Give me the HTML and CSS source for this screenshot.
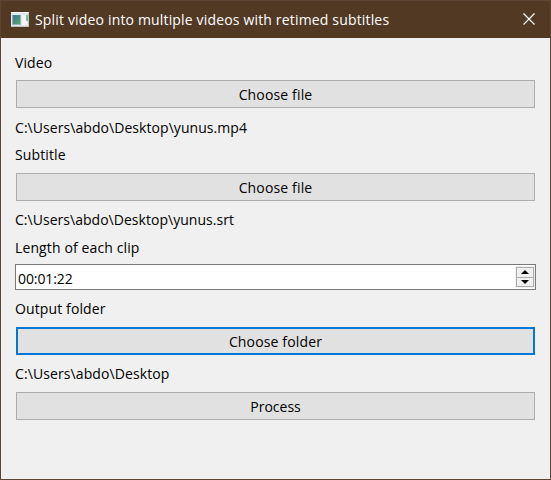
FILE: index.html
```html
<!DOCTYPE html>
<html lang="en">
<head>
<meta charset="utf-8">
<title>Split video into multiple videos with retimed subtitles</title>
<link rel="stylesheet" href="styles.css">
</head>
<body>
<div class="window">
  <header class="titlebar">
    <svg class="app-icon" width="18" height="15" viewBox="0 0 18 15">
      <defs><linearGradient id="screen" x1="0" y1="0" x2="1" y2="1"><stop offset="0" stop-color="#3f76a0"/><stop offset="1" stop-color="#55a76a"/></linearGradient></defs>
      <rect width="18" height="15" fill="#e6e7eb"/>
      <path d="M0 .5h18" stroke="#fafafa"/>
      <path d="M0 14.5h18M17.5 1v13" stroke="#bfc0c3"/>
      <rect x="1" y="3" width="9" height="10" fill="#93b5b5"/>
      <rect x="2" y="3" width="7" height="9" fill="url(#screen)"/>
      <rect x="11" y="3" width="5" height="10" fill="#f5f5f7"/>
      <rect x="15" y="3" width="2" height="6" fill="#7fb8a0"/>
    </svg>
    <h1 class="title">Split video into multiple videos with retimed subtitles</h1>
    <svg class="close" width="12" height="12" viewBox="0 0 12 12"><path d="M.5 .5l11 11M11.5 .5l-11 11" stroke="#fff" stroke-width="1.2"/></svg>
  </header>
  <main class="form">
    <div class="label">Video</div>
    <button class="button">Choose file</button>
    <div class="path">C:\Users\abdo\Desktop\yunus.mp4</div>
    <div class="label label-low">Subtitle</div>
    <button class="button">Choose file</button>
    <div class="path path-tight">C:\Users\abdo\Desktop\yunus.srt</div>
    <div class="label label-time">Length of each clip</div>
    <div class="spin">
      <span class="time">00:01:22</span>
      <div class="steps">
        <span class="step"><svg width="8" height="4" viewBox="0 0 8 4"><path d="M4 0l4 4H0z"/></svg></span>
        <span class="step"><svg width="8" height="4" viewBox="0 0 8 4"><path d="M0 0h8L4 4z"/></svg></span>
      </div>
    </div>
    <div class="label label-low">Output folder</div>
    <button class="button button-focus">Choose folder</button>
    <div class="path path-last">C:\Users\abdo\Desktop</div>
    <button class="button button-process">Process</button>
  </main>
</div>
</body>
</html>
```
FILE: styles.css
```css
* { box-sizing: border-box; }
body { margin: 0; font-family: "Open Sans", "Noto Sans", sans-serif; font-size: 14px; color: #000; }
.window { height: 480px; border: 1px solid #5b4535; background: #f0f0f0; }
.titlebar { display: flex; align-items: center; height: 37px; padding: 0 15px 0 10px; background: #523924; color: #fff; }
.close { margin-bottom: 1px; }
.title { flex: 1; margin: 0 0 0 6px; font-size: 14px; font-weight: 400; line-height: 20px; white-space: nowrap; letter-spacing: 0.165px; }
.form { display: flex; flex-direction: column; padding: 15px 14px 0; }
.label, .path { height: 20px; line-height: 20px; white-space: nowrap; }
.label { margin-bottom: 7px; letter-spacing: 0.12px; }
.label-low { margin-bottom: 8px; }
.path { margin: 10px 0 7px; letter-spacing: 0.06px; }
.path-tight { margin-top: 9px; letter-spacing: 0.03px; }
.path-last { margin: 9px 0 8px; letter-spacing: 0.1px; }
.label-time { margin: 1px 0 6px; }
.button { height: 28px; margin: 0 1px; padding: 1px 0 0; border: 1px solid #adadad; background: #e1e1e1; font: inherit; line-height: 20px; letter-spacing: 0.15px; color: #000; }
.button-focus { padding-top: 2px; border: 2px solid #0078d7; }
.button-process { letter-spacing: 0; }
.spin { display: flex; align-items: center; justify-content: space-between; height: 26px; margin-bottom: 9px; padding: 0 0 0 2px; border: 1px solid #7a7a7a; background: #fff; }
.time { padding-top: 2px; letter-spacing: -0.1px; }
.steps { display: flex; flex-direction: column; width: 20px; height: 22px; padding: 1px; background: #f0f0f0; }
.step { display: flex; flex: 1; align-items: center; justify-content: center; border: 1px solid #adadad; }
.step + .step { border-top: 0; }
```
